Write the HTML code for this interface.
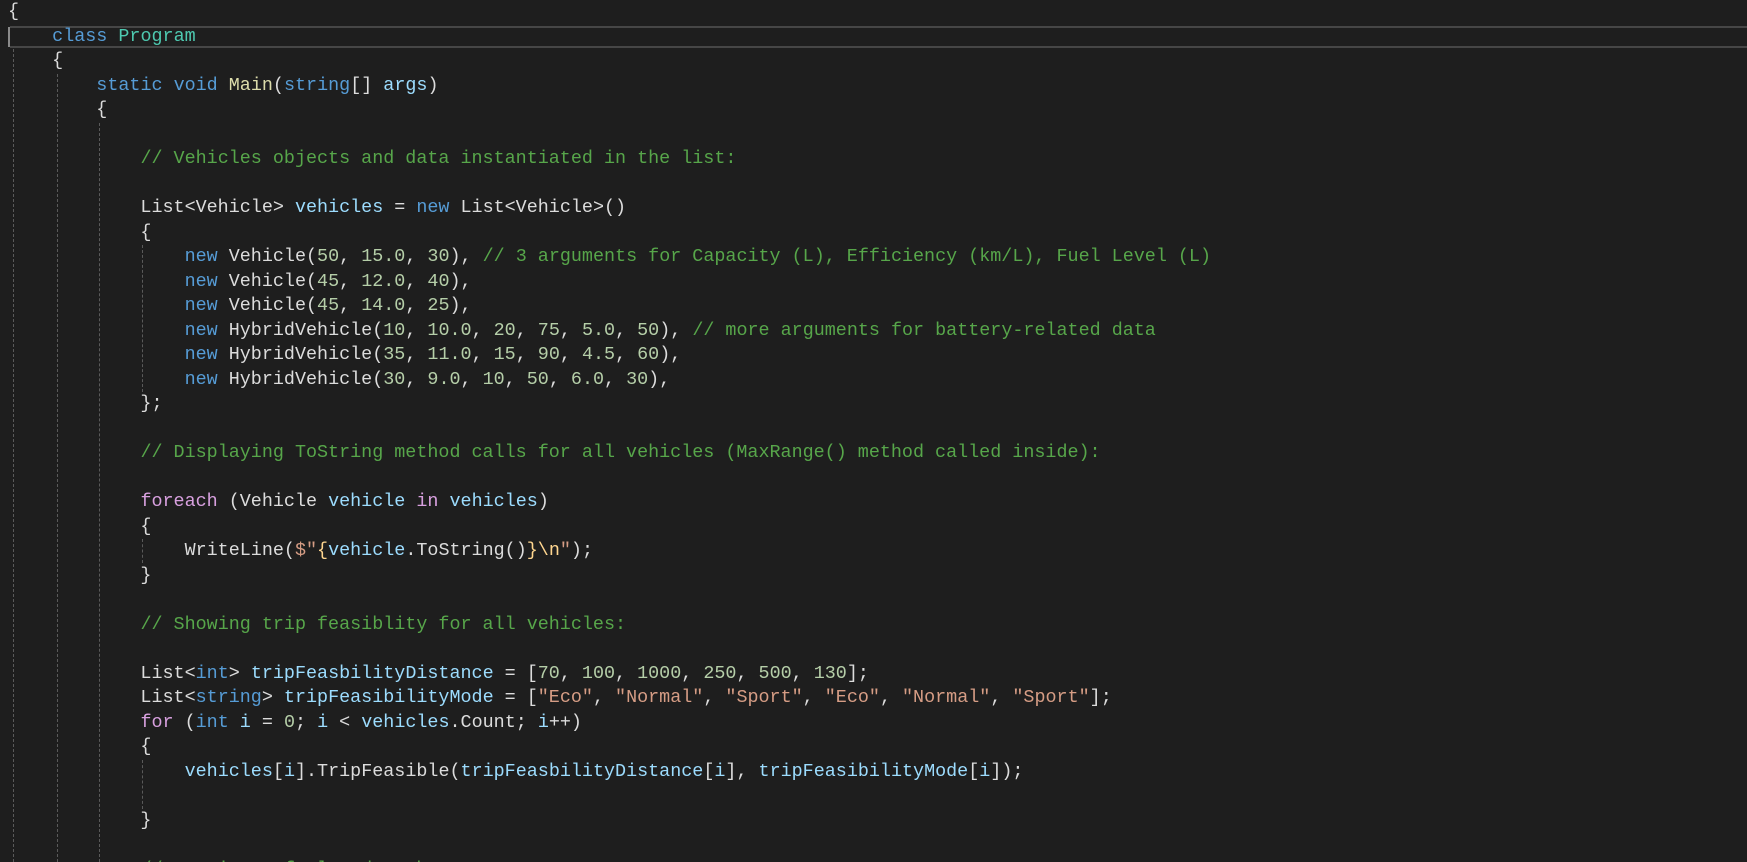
<!DOCTYPE html>
<html><head><meta charset="utf-8"><style>
html,body{margin:0;padding:0;background:#1e1e1e;width:1747px;height:862px;overflow:hidden;position:relative}
#c{position:absolute;left:8px;top:0px;margin:0;font-family:"Liberation Mono",monospace;font-size:18.4px;line-height:24.5px;color:#dcdcdc;white-space:pre}
.k{color:#569cd6}.t{color:#4ec9b0}.m{color:#dcdcaa}.v{color:#9cdcfe}.c{color:#57a64a}.n{color:#b5cea8}.s{color:#d69d85}.f{color:#d8a0df}.e{color:#ffd68f}
.g{position:absolute;width:0;border-left:1px dashed #5a5a5a}
.hl{position:absolute;left:10px;right:0;top:26px;height:18px;border-top:2px solid #464646;border-bottom:2px solid #464646}
</style></head><body>
<div class="hl"></div>
<div style="position:absolute;left:8px;top:27px;width:2px;height:20px;background:#8a8a8a"></div>
<div class="g" style="left:13px;top:49px;height:813px"></div>
<div class="g" style="left:57px;top:74px;height:788px"></div>
<div class="g" style="left:99px;top:123px;height:739px"></div>
<div class="g" style="left:142px;top:245px;height:147px"></div>
<div class="g" style="left:142px;top:539px;height:24px"></div>
<div class="g" style="left:142px;top:760px;height:49px"></div>
<pre id="c">{
    <span class="k">class</span> <span class="t">Program</span>
    {
        <span class="k">static</span> <span class="k">void</span> <span class="m">Main</span>(<span class="k">string</span>[] <span class="v">args</span>)
        {

            <span class="c">// Vehicles objects and data instantiated in the list:</span>

            List&lt;Vehicle&gt; <span class="v">vehicles</span> = <span class="k">new</span> List&lt;Vehicle&gt;()
            {
                <span class="k">new</span> Vehicle(<span class="n">50</span>, <span class="n">15.0</span>, <span class="n">30</span>), <span class="c">// 3 arguments for Capacity (L), Efficiency (km/L), Fuel Level (L)</span>
                <span class="k">new</span> Vehicle(<span class="n">45</span>, <span class="n">12.0</span>, <span class="n">40</span>),
                <span class="k">new</span> Vehicle(<span class="n">45</span>, <span class="n">14.0</span>, <span class="n">25</span>),
                <span class="k">new</span> HybridVehicle(<span class="n">10</span>, <span class="n">10.0</span>, <span class="n">20</span>, <span class="n">75</span>, <span class="n">5.0</span>, <span class="n">50</span>), <span class="c">// more arguments for battery-related data</span>
                <span class="k">new</span> HybridVehicle(<span class="n">35</span>, <span class="n">11.0</span>, <span class="n">15</span>, <span class="n">90</span>, <span class="n">4.5</span>, <span class="n">60</span>),
                <span class="k">new</span> HybridVehicle(<span class="n">30</span>, <span class="n">9.0</span>, <span class="n">10</span>, <span class="n">50</span>, <span class="n">6.0</span>, <span class="n">30</span>),
            };

            <span class="c">// Displaying ToString method calls for all vehicles (MaxRange() method called inside):</span>

            <span class="f">foreach</span> (Vehicle <span class="v">vehicle</span> <span class="f">in</span> <span class="v">vehicles</span>)
            {
                WriteLine(<span class="s">$"</span><span class="e">{</span><span class="v">vehicle</span>.ToString()<span class="e">}\n</span><span class="s">"</span>);
            }

            <span class="c">// Showing trip feasiblity for all vehicles:</span>

            List&lt;<span class="k">int</span>&gt; <span class="v">tripFeasbilityDistance</span> = [<span class="n">70</span>, <span class="n">100</span>, <span class="n">1000</span>, <span class="n">250</span>, <span class="n">500</span>, <span class="n">130</span>];
            List&lt;<span class="k">string</span>&gt; <span class="v">tripFeasibilityMode</span> = [<span class="s">"Eco"</span>, <span class="s">"Normal"</span>, <span class="s">"Sport"</span>, <span class="s">"Eco"</span>, <span class="s">"Normal"</span>, <span class="s">"Sport"</span>];
            <span class="f">for</span> (<span class="k">int</span> <span class="v">i</span> = <span class="n">0</span>; <span class="v">i</span> &lt; <span class="v">vehicles</span>.Count; <span class="v">i</span>++)
            {
                <span class="v">vehicles</span>[<span class="v">i</span>].TripFeasible(<span class="v">tripFeasbilityDistance</span>[<span class="v">i</span>], <span class="v">tripFeasibilityMode</span>[<span class="v">i</span>]);

            }

            <span class="c">// Testing refuel and recharge:</span>
</pre>
</body></html>
